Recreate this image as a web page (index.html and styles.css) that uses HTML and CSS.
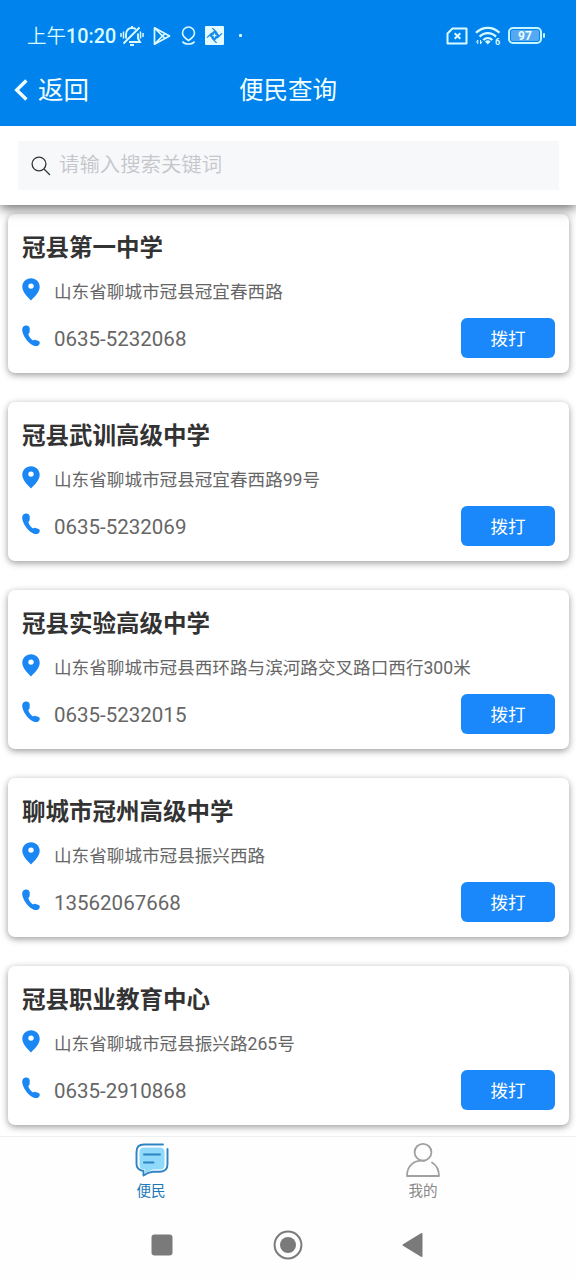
FILE: index.html
```html
<!DOCTYPE html>
<html lang="zh-CN">
<head>
<meta charset="utf-8">
<title>便民查询</title>
<link rel="stylesheet" href="styles.css">
</head>
<body>
<svg class="defs" width="0" height="0">
  <symbol id="pin" viewBox="0 0 18 23"><path fill="#1a87f5" fill-rule="evenodd" d="M9 .3C4 .3.3 4 .3 8.800.3 14 5.500 19 9 22.500 12.500 19 17.700 14 17.700 8.800 17.700 4 14 .3 9 .3ZM9 5.400a2.700 2.700 0 1 1 0 5.400 2.700 2.700 0 0 1 0-5.400Z"/></symbol>
  <symbol id="phone" viewBox="0 0 18 22"><path fill="#1a87f5" d="M2.800.7C.5 1.300-.3 3.800.5 6.900 2 12.500 6.500 18 11.300 20.400 14 21.700 16.700 21 17.600 18.700 18.100 17.300 17.500 16.200 16 15.700L13.500 14.900C12.500 14.600 11.800 15 11 15.500 8.800 14 7.100 11.800 6.300 9.200 7.100 8.500 7.700 7.500 7.700 6.100V3.300C7.500 1 5.300-.1 2.800.7Z"/></symbol>
</svg>
<div class="screen">
  <header class="top">
    <div class="status">
      <span class="clock"><span class="ampm">上午</span>10:20</span>
      <svg class="bell" width="24" height="22" viewBox="0 0 24 22" fill="none" stroke="#d9fbff" stroke-width="1.900"><path d="M6 13.500V9.500C6 5.500 8.500 3 12 3c1.500 0 2.800.4 3.800 1.200M18 8.500v5l2 3.500H9M12 1v2M3.500 18.500 19.500 2.500M10 20h4"/><path stroke-width="1.500" d="M1 8v4M3.500 6.500v7M20.500 6.500v7M23 8v4"/></svg>
      <svg class="play" width="18" height="20" viewBox="0 0 18 20" fill="none" stroke="#d9fbff" stroke-width="1.700" stroke-linejoin="round"><path d="M1.500 1.800V18.200L16.500 10ZM1.500 1.800 12 12.500M1.500 18.200 12 7.500"/></svg>
      <svg class="place" width="15" height="20" viewBox="0 0 15 20" fill="none" stroke="#d9fbff" stroke-width="1.600"><path d="M7.500 14.500C5 12.800 1.500 10.600 1.500 7a6 6 0 0 1 12 0c0 3.600-3.500 5.800-6 7.500ZM1.500 15.500c2 3.400 10 3.400 12 0"/></svg>
      <svg class="pinwheel" width="19" height="19" viewBox="0 0 18 18"><rect width="18" height="18" rx="1" fill="#e3fbff"/><path fill="#168be9" d="m9 4 5 5-5 5-5-5Z"/><path d="M7 2 11.500 6.500M16 7l-4.500 4.500M11 16l-4.500-4.500M2 11l4.500-4.500" stroke="#168be9" stroke-width="1.300"/><path fill="#cff5ff" d="m9 6.500.8 1.700 1.700.8-1.700.8L9 11.500l-.8-1.700L6.500 9l1.700-.8Z"/></svg>
      <i class="dot"></i>
      <svg class="sim" width="22" height="18" viewBox="0 0 22 18" fill="none" stroke="#d9fbff" stroke-width="2"><path stroke-linejoin="round" d="M6.500 1.500H20.500v15H1.500v-10Z"/><path d="m8.700 6.200 5.600 5.600m0-5.600-5.600 5.600"/></svg>
      <svg class="wifi" width="26" height="20" viewBox="0 0 26 20" fill="none" stroke="#d9fbff" stroke-width="2.300"><path d="M1 6.800c6.500-6.700 17-6.700 23.500 0M4.600 10.600c4.600-4.700 11.800-4.700 16.400 0M8.300 14c2.700-2.600 6.400-2.600 9 0"/><path fill="#d9fbff" stroke="none" d="M10 15.500q2.800-2.300 5.600 0L12.800 18.500Z"/><path stroke-width="1" d="M2.800 18v-4l-1.500 2.500M5.500 14v4l1.500-2.500"/><text x="20" y="19" class="wifi-num">6</text></svg>
      <span class="battery"><b>97</b></span><i class="cap"></i>
    </div>
    <div class="nav">
      <svg class="back-icon" width="14" height="22" viewBox="0 0 14 22" fill="none" stroke="#f2ffff" stroke-width="3.400"><path d="M12.400 1.500 2.700 11l9.700 9.500"/></svg>
      <span class="back">返回</span>
      <h1 class="title">便民查询</h1>
    </div>
  </header>
  <div class="search">
    <div class="field">
      <svg width="20" height="20" viewBox="0 0 20 20" fill="none" stroke="#333" stroke-width="1.300"><circle cx="8" cy="8" r="6.900"/><path d="m13 13 6 6"/></svg>
      <span>请输入搜索关键词</span>
    </div>
  </div>
  <main class="list">
    <article class="card"><h2>冠县第一中学</h2><div class="addr"><svg><use href="#pin"/></svg><span>山东省聊城市冠县冠宜春西路</span></div><div class="tel"><svg><use href="#phone"/></svg><span>0635-5232068</span><a class="call">拨打</a></div></article>
    <article class="card"><h2>冠县武训高级中学</h2><div class="addr"><svg><use href="#pin"/></svg><span>山东省聊城市冠县冠宜春西路99号</span></div><div class="tel"><svg><use href="#phone"/></svg><span>0635-5232069</span><a class="call">拨打</a></div></article>
    <article class="card"><h2>冠县实验高级中学</h2><div class="addr"><svg><use href="#pin"/></svg><span>山东省聊城市冠县西环路与滨河路交叉路口西行300米</span></div><div class="tel"><svg><use href="#phone"/></svg><span>0635-5232015</span><a class="call">拨打</a></div></article>
    <article class="card"><h2>聊城市冠州高级中学</h2><div class="addr"><svg><use href="#pin"/></svg><span>山东省聊城市冠县振兴西路</span></div><div class="tel"><svg><use href="#phone"/></svg><span>13562067668</span><a class="call">拨打</a></div></article>
    <article class="card"><h2>冠县职业教育中心</h2><div class="addr"><svg><use href="#pin"/></svg><span>山东省聊城市冠县振兴路265号</span></div><div class="tel"><svg><use href="#phone"/></svg><span>0635-2910868</span><a class="call">拨打</a></div></article>
  </main>
  <nav class="tabs">
    <div class="tab active">
      <svg width="34" height="34" viewBox="0 0 34 34" fill="none"><path fill="#8fd9fb" d="M9 4.500h16q4.500 0 4.500 4.500v13q0 4.500-4.500 4.500h-7L10 30v-3.500q-5.500 0-5.500-4.500V9q0-4.500 4.500-4.500Z"/><path stroke="#2c84c3" stroke-width="1.900" stroke-linecap="round" stroke-linejoin="round" d="M28 1.500H9Q1.500 1.500 1.500 9v12q0 6 7 7v4.500q4.500-3.500 9.500-3.800h7q7.500 0 7.500-7.700V6"/><path stroke="#2c84c3" stroke-width="2" stroke-linecap="round" d="M9 11.500h16M9 19.500h9.500"/></svg>
      <span>便民</span>
    </div>
    <div class="tab">
      <svg width="34" height="34" viewBox="0 0 34 34" fill="none" stroke="#a0a0a0" stroke-width="1.800"><circle cx="17" cy="9.200" r="8.400"/><path stroke-linejoin="round" stroke-linecap="round" d="M18.500 17.800C8 16.500 1 23 1 33H33c0-6-2-10.500-7-13.500"/></svg>
      <span>我的</span>
    </div>
  </nav>
  <footer class="system">
    <svg width="22" height="22"><rect x=".5" y=".5" width="21" height="21" rx="3" fill="#7a7a7a"/></svg>
    <svg class="home" width="30" height="30"><circle cx="15" cy="15" r="13.400" fill="none" stroke="#7a7a7a" stroke-width="2"/><circle cx="15" cy="15" r="8" fill="#7a7a7a"/></svg>
    <svg class="prev" width="21" height="26"><path d="M19.500 2v22L1.500 13Z" fill="#7a7a7a" stroke="#7a7a7a" stroke-width="2" stroke-linejoin="round"/></svg>
  </footer>
</div>
</body>
</html>
```
FILE: styles.css
```css
* { box-sizing: border-box; }
body { margin: 0; font-family: Roboto, "Noto Sans CJK SC", sans-serif; background: #fff; }
svg { display: block; flex: none; overflow: visible; }
.defs { position: absolute; }
h1, h2 { margin: 0; }
.screen { width: 576px; height: 1280px; overflow: hidden; display: flex; flex-direction: column; }

.top { height: 126px; flex: none; background: #0083ed; color: #f2ffff; position: relative; z-index: 2; }
.status { height: 71px; display: flex; align-items: center; padding-left: 27px; }
.clock { width: 93px; padding-top: 3px; font-size: 19.800px; font-weight: 500; line-height: 24px; white-space: nowrap; color: #d9fbff; }
.ampm { font-size: 19.500px; font-weight: 350; }
.play { margin-left: 9px; }
.place { margin-left: 10px; }
.pinwheel { margin-left: 9px; }
.dot { width: 3px; height: 3px; margin-left: 15px; background: #d9fbff; border-radius: 1px; }
.sim { margin-left: 204px; }
.wifi { margin-left: 7px; }
.wifi-num { font: 700 9px Roboto, sans-serif; fill: #d9fbff; stroke: none; }
.battery { width: 34px; height: 17px; margin-left: 7px; padding: 1px; border: 2px solid #c5f5ff; border-radius: 5px; }
.battery b { display: block; height: 11px; border-radius: 2px; background: #55a9f3; color: #effeff; font-size: 12px; font-weight: 700; line-height: 12px; text-align: center; }
.cap { width: 2px; height: 5px; margin-left: 1px; background: #c5f5ff; border-radius: 1px; }

.nav { display: grid; grid-template-columns: 24px 215px 1fr; align-items: center; height: 36px; }
.back-icon { margin-left: 14px; }
.back { padding-left: 14px; font-size: 25.500px; line-height: 34px; }
.title { padding-top: 3px; font-size: 24.500px; font-weight: 400; line-height: 34px; }

.search { height: 79px; flex: none; padding: 15px 17px 15px 18px; background: #fff; position: relative; z-index: 1; box-shadow: 0 3px 12px rgba(0, 0, 0, .62); }
.field { display: flex; align-items: center; gap: 8px; height: 49px; padding-left: 13px; background: #f7f8fa; color: #c5c6ca; font-size: 20.400px; font-weight: 350; line-height: 48px; }
.field span { padding-bottom: 1px; }

.list { height: 931px; flex: none; padding: 9px 7px 0 8px; overflow: hidden; display: flex; flex-direction: column; gap: 29px; }
.card { height: 159px; flex: none; padding: 15px 14px; border-radius: 7px; background: #fff; color: #666; box-shadow: 0 2px 7px rgba(0, 0, 0, .4); }
.card h2 { height: 36px; font-size: 23.500px; line-height: 38px; font-weight: 700; color: #333; }
.addr { display: flex; align-items: center; gap: 14px; height: 50px; font-size: 17.600px; line-height: 50px; white-space: nowrap; }
.addr svg { width: 18px; height: 23px; margin-top: -1px; }
.addr span { padding-top: 3px; }
.tel { display: flex; align-items: center; gap: 14px; height: 46px; font-size: 20.500px; }
.tel span { padding-top: 2px; }
.tel svg { width: 18px; height: 22px; margin-top: -5px; }
.call { width: 94px; height: 40px; margin-left: auto; border-radius: 6px; background: #1a88fa; color: #fff; font-size: 17.600px; line-height: 43px; text-align: center; }

.tabs { height: 74px; flex: none; display: grid; grid-template-columns: 302px 1fr; border-top: 1px solid #eee; background: #fefefe; }
.tab { display: flex; flex-direction: column; align-items: center; padding-top: 6px; color: #888; font-size: 14.600px; line-height: 22px; }
.tab span { margin-top: 3px; }
.tab:last-child { padding-right: 32px; }
.active { color: #1a79bb; }
.active svg { margin-left: 1px; }
.system { flex: 1; display: flex; align-items: center; padding-left: 151px; background: #fefefe; }
.home { margin-left: 100px; }
.prev { margin-left: 99px; }
```
